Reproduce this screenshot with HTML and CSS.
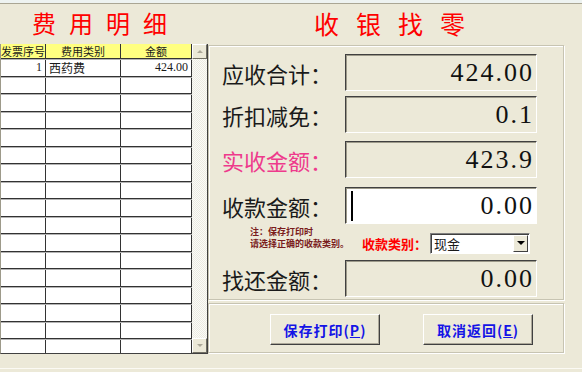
FILE: index.html
```html
<!DOCTYPE html>
<html lang="zh-CN">
<head>
  <meta charset="UTF-8">
  <title>收银找零</title>
  <link rel="stylesheet" href="styles.css">
</head>
<body>

<div class="topstrip"></div>

<div class="titles">
  <div class="title title-left">费用明细</div>
  <div class="title title-right">收银找零</div>
</div>

<div class="main">
  <!-- 费用明细表 -->
  <div class="grid">
    <div class="grid-table">
      <div class="row head"><div>发票序号</div><div>费用类别</div><div>金额</div></div>
      <div class="row"><div class="num">1</div><div class="txt">西药费</div><div class="num">424.00</div></div>
      <div class="row"><div></div><div></div><div></div></div>
      <div class="row"><div></div><div></div><div></div></div>
      <div class="row"><div></div><div></div><div></div></div>
      <div class="row"><div></div><div></div><div></div></div>
      <div class="row"><div></div><div></div><div></div></div>
      <div class="row"><div></div><div></div><div></div></div>
      <div class="row"><div></div><div></div><div></div></div>
      <div class="row"><div></div><div></div><div></div></div>
      <div class="row"><div></div><div></div><div></div></div>
      <div class="row"><div></div><div></div><div></div></div>
      <div class="row"><div></div><div></div><div></div></div>
      <div class="row"><div></div><div></div><div></div></div>
      <div class="row"><div></div><div></div><div></div></div>
      <div class="row"><div></div><div></div><div></div></div>
      <div class="row"><div></div><div></div><div></div></div>
      <div class="row"><div></div><div></div><div></div></div>
    </div>
    <div class="vscroll">
      <div class="sbtn"><span class="arrow up"></span></div>
      <div class="track"></div>
      <div class="sbtn"><span class="arrow down"></span></div>
    </div>
  </div>

  <div class="side">
    <!-- 收银 -->
    <div class="panel cashier">
      <div class="field">
        <div class="label">应收合计：</div>
        <div class="box"><span class="value">424.00</span></div>
      </div>
      <div class="field loose">
        <div class="label">折扣减免：</div>
        <div class="box"><span class="value">0.1</span></div>
      </div>
      <div class="field loose">
        <div class="label pink">实收金额：</div>
        <div class="box"><span class="value">423.9</span></div>
      </div>
      <div class="field">
        <div class="label">收款金额：</div>
        <div class="box input"><span class="caret"></span><span class="value">0.00</span></div>
      </div>
      <div class="pay-type">
        <div class="note">注：保存打印时<br>请选择正确的收款类别。</div>
        <div class="kind-label">收款类别：</div>
        <div class="combo">
          <span class="combo-text">现金</span>
          <span class="combo-btn"><span class="arrow down dark"></span></span>
        </div>
      </div>
      <div class="field">
        <div class="label">找还金额：</div>
        <div class="box"><span class="value">0.00</span></div>
      </div>
    </div>

    <!-- 操作 -->
    <div class="panel actions">
      <button class="btn">保存打印(<u>P</u>)</button>
      <button class="btn">取消返回(<u>E</u>)</button>
    </div>
  </div>
</div>

<div class="footer"></div>

</body>
</html>
```

FILE: styles.css
```css
body {
  margin: 0;
  width: 582px;
  height: 372px;
  overflow: hidden;
  background-color: #ece9d8;
  font-family: "Noto Sans CJK SC", "Liberation Sans", sans-serif;
  color: #1a1a1a;
}
.topstrip {
  height: 3px;
  background-color: #eef3f1;
  border-bottom: 1px solid #aaa694;
}
.titles {
  display: flex;
  height: 40px;
}
.title {
  color: #ff0000;
  line-height: 28px;
  padding-top: 5px;
  white-space: nowrap;
}
.title-left {
  width: 208px;
  box-sizing: border-box;
  padding-left: 32px;
  font-size: 24px;
  letter-spacing: 13px;
}
.title-right {
  padding-left: 106px;
  font-size: 25px;
  letter-spacing: 17px;
}
.main {
  display: flex;
}

/* grid */
.grid {
  width: 208px;
  height: 310px;
  box-sizing: border-box;
  display: flex;
  overflow: hidden;
  background-color: #fff;
  border-left: 1px solid #9d9a8a;
  border-right: 1px solid #404040;
  border-bottom: 1px solid #404040;
}
.grid-table {
  width: 191px;
  flex: none;
}
.row {
  display: grid;
  grid-template-columns: 45px 75px 71px;
  height: 17.5px;
  box-sizing: border-box;
  border-top: 1px solid #b4b4b4;
  border-bottom: 1px solid #333;
  font-size: 12px;
  line-height: 15px;
}
.row > div {
  border-right: 1px solid #333;
  overflow: hidden;
  white-space: nowrap;
}
.row.head {
  height: 15px;
  border-top: none;
  background-color: #ffff80;
  font-size: 11px;
  line-height: 14px;
}
.row.head > div {
  text-align: center;
}
.row .num {
  text-align: right;
  padding-right: 3px;
  font-family: "Liberation Serif", serif;
  font-size: 12px;
}
.row .txt {
  padding-left: 3px;
}
.vscroll {
  width: 15px;
  flex: none;
  display: flex;
  flex-direction: column;
  background: repeating-conic-gradient(#fbfbf8 0 25%, #ecebe2 0 50%) 0 0 / 2px 2px;
}
.track {
  flex: 1;
}
.sbtn {
  height: 15px;
  box-sizing: border-box;
  display: flex;
  align-items: center;
  justify-content: center;
  background-color: #ece9d8;
  border: 1px solid;
  border-color: #fff #716f64 #716f64 #fff;
}
.arrow {
  width: 0;
  height: 0;
  border-left: 3px solid transparent;
  border-right: 3px solid transparent;
}
.arrow.up {
  border-bottom: 3px solid #aca899;
}
.arrow.down {
  border-top: 3px solid #aca899;
}
.arrow.dark {
  border-left-width: 4px;
  border-right-width: 4px;
  border-top: 4px solid #000;
}

/* right side */
.side {
  width: 356px;
  padding-top: 1px;
}
.panel {
  box-sizing: border-box;
  border: 1px solid #c7c4b2;
  box-shadow: inset 1px 1px 0 #fff, 1px 1px 0 #fff;
}
.cashier {
  height: 255px;
  padding: 8px 0 0 13px;
}
.field {
  display: flex;
  align-items: center;
  height: 37px;
  margin-bottom: 5px;
}
.field.loose {
  margin-bottom: 8px;
}
.field.loose + .field.loose {
  margin-bottom: 9px;
}
.label {
  width: 123px;
  font-size: 22px;
  line-height: 26px;
  white-space: nowrap;
}
.label.pink {
  color: #ee3a8c;
}
.box {
  width: 192px;
  height: 37px;
  box-sizing: border-box;
  display: flex;
  align-items: center;
  justify-content: flex-end;
  padding-right: 2px;
  border: 1px solid;
  border-color: #404040 #fff #fff #404040;
  box-shadow: inset 1px 1px 0 #9d9a8a;
}
.box.input {
  justify-content: space-between;
  padding-left: 5px;
  background-color: #fff;
}
.caret {
  width: 2px;
  height: 30px;
  background-color: #000;
}
.value {
  font-family: "Liberation Serif", serif;
  font-size: 26px;
  letter-spacing: 2px;
  color: #111;
}
.pay-type {
  display: flex;
  align-items: center;
  height: 28px;
  margin-bottom: 3px;
  padding-left: 28px;
}
.note {
  width: 112px;
  align-self: flex-start;
  margin-top: -3px;
  font-size: 9px;
  line-height: 12px;
  font-weight: bold;
  color: #7a1c1c;
  white-space: nowrap;
}
.kind-label {
  width: 68px;
  font-size: 13px;
  font-weight: bold;
  color: #ff0000;
  white-space: nowrap;
}
.combo {
  width: 100px;
  height: 21px;
  box-sizing: border-box;
  display: flex;
  align-items: center;
  justify-content: space-between;
  background-color: #fff;
  border: 1px solid;
  border-color: #808080 #fff #fff #808080;
  box-shadow: inset 1px 1px 0 #404040;
  padding: 1px 1px 1px 3px;
}
.combo-text {
  font-size: 13px;
  line-height: 17px;
}
.combo-btn {
  width: 15px;
  height: 17px;
  box-sizing: border-box;
  display: flex;
  align-items: center;
  justify-content: center;
  background-color: #ece9d8;
  border: 1px solid;
  border-color: #fff #404040 #404040 #fff;
}
.actions {
  height: 50px;
  margin-top: 3px;
  display: flex;
  gap: 43px;
  padding: 10px 0 0 61px;
}
.btn {
  width: 110px;
  height: 31px;
  background-color: #ece9d8;
  border: 1px solid;
  border-color: #fff #404040 #404040 #fff;
  box-shadow: inset -1px -1px 0 #aca899;
  font-family: "Noto Sans CJK SC", sans-serif;
  font-size: 14px;
  font-weight: bold;
  color: #1414e6;
  letter-spacing: 1px;
  padding: 0;
}
.footer {
  height: 14px;
  border-bottom: 1px solid #fbfaf4;
}
```
